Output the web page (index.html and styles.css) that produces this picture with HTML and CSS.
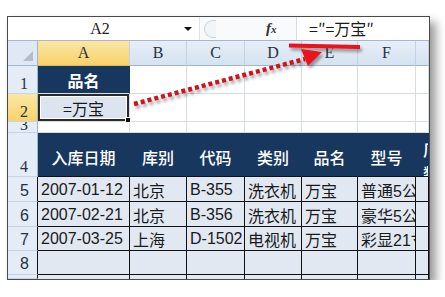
FILE: index.html
```html
<!DOCTYPE html>
<html lang="zh-CN">
<head>
  <meta charset="UTF-8">
  <meta name="viewport" content="width=device-width, initial-scale=1.0">
  <title>A2 公式</title>
  <link rel="stylesheet" href="styles.css">
</head>
<body>

  <!-- Sheet window -->
  <div class="sheet">

    <!-- Formula bar -->
    <div class="formula-bar">
      <div class="name-box">
        <span class="name">A2</span>
        <span class="caret"></span>
      </div>
      <div class="pill"></div>
      <div class="fx">f<span>x</span></div>
      <div class="formula">=″=万宝″</div>
    </div>

    <!-- Grid -->
    <div class="grid">
      <!-- column headers -->
      <div class="corner"><span class="tri"></span></div>
      <div class="col-head active">A</div>
      <div class="col-head">B</div>
      <div class="col-head">C</div>
      <div class="col-head">D</div>
      <div class="col-head">E</div>
      <div class="col-head">F</div>
      <div class="col-head"></div>

      <!-- row 1 -->
      <div class="row-head">1</div>
      <div class="cell navy title">品名</div>
      <div class="cell"></div>
      <div class="cell"></div>
      <div class="cell"></div>
      <div class="cell"></div>
      <div class="cell"></div>
      <div class="cell"></div>

      <!-- row 2 -->
      <div class="row-head active">2</div>
      <div class="cell sel">=万宝</div>
      <div class="cell"></div>
      <div class="cell"></div>
      <div class="cell"></div>
      <div class="cell"></div>
      <div class="cell"></div>
      <div class="cell"></div>

      <!-- row 3 -->
      <div class="row-head short">3</div>
      <div class="cell"></div>
      <div class="cell"></div>
      <div class="cell"></div>
      <div class="cell"></div>
      <div class="cell"></div>
      <div class="cell"></div>
      <div class="cell"></div>

      <!-- row 4 -->
      <div class="row-head">4</div>
      <div class="cell head">入库日期</div>
      <div class="cell head">库别</div>
      <div class="cell head">代码</div>
      <div class="cell head">类别</div>
      <div class="cell head">品名</div>
      <div class="cell head">型号</div>
      <div class="cell head cut">厂<br>数</div>

      <!-- row 5 -->
      <div class="row-head sans dark">5</div>
      <div class="cell data">2007-01-12</div>
      <div class="cell data">北京</div>
      <div class="cell data">B-355</div>
      <div class="cell data">洗衣机</div>
      <div class="cell data">万宝</div>
      <div class="cell data">普通5公斤</div>
      <div class="cell data"></div>

      <!-- row 6 -->
      <div class="row-head sans dark">6</div>
      <div class="cell data">2007-02-21</div>
      <div class="cell data">北京</div>
      <div class="cell data">B-356</div>
      <div class="cell data">洗衣机</div>
      <div class="cell data">万宝</div>
      <div class="cell data">豪华5公斤</div>
      <div class="cell data"></div>

      <!-- row 7 -->
      <div class="row-head sans dark">7</div>
      <div class="cell data">2007-03-25</div>
      <div class="cell data">上海</div>
      <div class="cell data">D-1502</div>
      <div class="cell data">电视机</div>
      <div class="cell data">万宝</div>
      <div class="cell data">彩显21寸</div>
      <div class="cell data"></div>

      <!-- row 8 -->
      <div class="row-head sans dark">8</div>
      <div class="cell data"></div>
      <div class="cell data"></div>
      <div class="cell data"></div>
      <div class="cell data"></div>
      <div class="cell data"></div>
      <div class="cell data"></div>
      <div class="cell data"></div>

      <!-- row 9 (cut off) -->
      <div class="row-head dark"></div>
      <div class="cell data open"></div>
      <div class="cell data open"></div>
      <div class="cell data open"></div>
      <div class="cell data open"></div>
      <div class="cell data open"></div>
      <div class="cell data open"></div>
      <div class="cell data open"></div>
    </div>
  </div>

  <!-- Red callout drawn over the sheet -->
  <svg class="callout" width="445" height="297" viewBox="0 0 445 297">
    <defs>
      <filter id="shade" x="-20%" y="-50%" width="140%" height="220%">
        <feDropShadow dx="2" dy="3" stdDeviation="1.6" flood-color="#000" flood-opacity="0.35"/>
      </filter>
    </defs>
    <g filter="url(#shade)">
      <line x1="289" y1="45.5" x2="360" y2="47" stroke="#e8121b" stroke-width="4"/>
      <line x1="134" y1="104" x2="305" y2="59" stroke="#c8141e" stroke-width="4.5" stroke-dasharray="4 3"/>
      <polygon points="301,49 322,52 308,66" fill="#e8121b"/>
    </g>
  </svg>

</body>
</html>
```

FILE: styles.css
```css
/* General styles */
body {
  background-color: #ffffff;
  margin: 0;
  font-family: 'Liberation Sans', 'Noto Sans CJK SC', sans-serif;
}

.sheet {
  position: relative;
  margin: 16px 0 0 7px;
  width: 423px;
  height: 264px;
  box-sizing: border-box;
  border: 1px solid #4a4a4a;
  background-color: #ffffff;
  box-shadow: 6px 6px 9px rgba(0, 0, 0, 0.4);
  overflow: hidden;
}

/* Formula bar */
.formula-bar {
  display: flex;
  height: 24px;
  box-sizing: border-box;
  border-bottom: 1px solid #a9b7c8;
  background-color: #f9fafc;
}

.name-box {
  display: flex;
  align-items: center;
  width: 192px;
  background-color: #ffffff;
  border-right: 1px solid #dfe3e8;
  box-sizing: border-box;
}

.name {
  flex: 1;
  text-align: center;
  font-family: 'Liberation Serif', serif;
  font-size: 16px;
  color: #222222;
  padding-left: 8px;
}

.caret {
  width: 0;
  height: 0;
  border-left: 4px solid transparent;
  border-right: 4px solid transparent;
  border-top: 4px solid #111111;
  margin-right: 7px;
}

.pill {
  width: 12px;
  height: 18px;
  margin: 3px 0 0 4px;
  border: 1px solid #c9d2de;
  border-right: none;
  border-radius: 9px 0 0 9px;
  background-color: #f1f4f8;
  box-sizing: border-box;
}

.fx {
  margin-left: 50px;
  width: 30px;
  font-family: 'Liberation Serif', serif;
  font-style: italic;
  font-weight: bold;
  font-size: 15px;
  line-height: 23px;
  color: #333333;
}

.fx span {
  font-size: 11px;
}

.formula {
  flex: 1;
  background-color: #ffffff;
  border-left: 1px solid #d6dce4;
  padding-left: 12px;
  font-size: 16px;
  line-height: 23px;
  color: #1a1a1a;
  font-family: 'Noto Sans CJK SC', sans-serif;
}

/* Grid */
.grid {
  display: grid;
  grid-template-columns: 30px 92px 57px 58px 57px 56px 58px 1fr;
  grid-template-rows: 25px 28px 28px 11px 44px 25px 25px 24px 24px 1fr;
  height: 238px;
}

.grid > div {
  box-sizing: border-box;
  overflow: hidden;
  white-space: nowrap;
}

.corner {
  position: relative;
  background-color: #dfe8f4;
  border-right: 1px solid #9eb6ce;
  border-bottom: 1px solid #9eb6ce;
}

.tri {
  position: absolute;
  right: 4px;
  bottom: 4px;
  width: 0;
  height: 0;
  border-left: 10px solid transparent;
  border-bottom: 10px solid #b4bcc6;
}

.col-head {
  display: flex;
  align-items: center;
  justify-content: center;
  font-family: 'Liberation Serif', serif;
  font-size: 16px;
  color: #27313d;
  background: linear-gradient(#e6eef8, #d6e2f1);
  border-right: 1px solid #c2d1e3;
  border-bottom: 1px solid #9eb6ce;
}

.col-head.active {
  background: linear-gradient(#fbe7a4, #f7d36a);
  border-bottom-color: #e2b853;
}

.row-head {
  display: flex;
  align-items: flex-end;
  padding: 0 0 1px 12px;
  font-family: 'Liberation Serif', serif;
  font-size: 16px;
  line-height: 17px;
  color: #27313d;
  background-color: #e4ecf7;
  border-right: 1px solid #9eb6ce;
  border-bottom: 1px solid #c5d3e3;
}

.row-head.active {
  background: linear-gradient(#fbe7a4, #f7d36a);
}

.row-head.short {
  padding-bottom: 0;
  line-height: 14px;
}

.row-head.sans {
  font-family: 'Liberation Sans', sans-serif;
  padding-bottom: 2px;
}

.row-head.dark {
  border-right-color: #111111;
}

.cell {
  display: flex;
  align-items: center;
  border-right: 1px solid #d8dde4;
  border-bottom: 1px solid #d8dde4;
  background-color: #ffffff;
  font-size: 16px;
  color: #1a1a1a;
}

.cell.navy {
  background-color: #17375e;
  border-right-color: #17375e;
}

.cell.title {
  justify-content: center;
  color: #ffffff;
  font-size: 16px;
  font-weight: bold;
  font-family: 'Noto Sans CJK SC', sans-serif;
}

.cell.sel {
  position: relative;
  overflow: visible;
  justify-content: center;
  background-color: #dbe4ef;
  box-shadow: inset 0 0 0 2px #2a2a2a, inset 0 0 0 3px #ffffff;
  font-size: 16px;
  font-family: 'Noto Sans CJK SC', sans-serif;
  z-index: 1;
}

.cell.sel::after {
  content: "";
  position: absolute;
  right: -2px;
  bottom: -2px;
  width: 4px;
  height: 4px;
  background-color: #111111;
  border: 1px solid #ffffff;
}

.cell.head {
  justify-content: center;
  padding-top: 4px;
  background-color: #17375e;
  border-right-color: #17375e;
  border-bottom: 1px solid #111111;
  color: #ffffff;
  font-size: 16px;
  font-weight: 500;
  font-family: 'Noto Sans CJK SC', sans-serif;
}

.cell.cut {
  justify-content: flex-start;
  align-items: flex-start;
  white-space: normal;
  padding: 4px 0 0 7px;
  line-height: 24px;
}

.cell.data {
  padding-left: 3px;
  padding-top: 1px;
  background-color: #e1e8f2;
  border-right: 1px solid #111111;
  border-bottom: 1px solid #111111;
  font-size: 16px;
}

.cell.open {
  border-bottom: none;
}

/* Callout overlay */
.callout {
  position: absolute;
  left: 0;
  top: 0;
  pointer-events: none;
}
```
